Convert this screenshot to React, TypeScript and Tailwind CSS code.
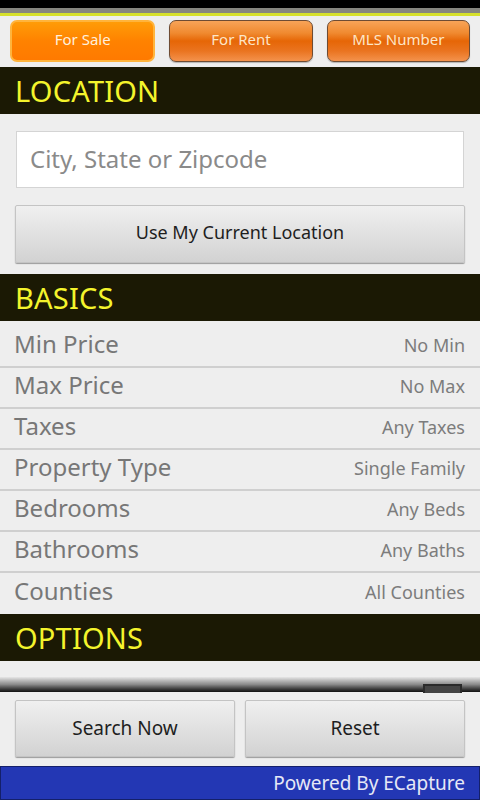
import { useState } from "react"

const rows = [
  { label: "Min Price", value: "No Min" },
  { label: "Max Price", value: "No Max" },
  { label: "Taxes", value: "Any Taxes" },
  { label: "Property Type", value: "Single Family" },
  { label: "Bedrooms", value: "Any Beds" },
  { label: "Bathrooms", value: "Any Baths" },
  { label: "Counties", value: "All Counties" },
]

const tabs = ["For Sale", "For Rent", "MLS Number"]

function SectionHeader({ title }: { title: string }) {
  return (
    <div className="h-[47px] bg-[#1b1904] flex items-center px-[15px]">
      <span className="text-[29px] leading-none text-[#f4f42c] tracking-[0.2px]">{title}</span>
    </div>
  )
}

export default function App() {
  const [active, setActive] = useState("For Sale")

  return (
    <div className="w-[480px] h-[800px] flex flex-col bg-[#eeeeee] overflow-hidden relative" style={{ fontFamily: '"Noto Sans", "Open Sans", sans-serif' }}>
      <div className="h-[8px] bg-black" />
      <div className="h-[5px] bg-[#868680]" />
      <div className="h-[3px] bg-[#d6e02c]" />

      <div className="h-[51px] flex items-center gap-[14px] px-[10px] pb-[2px]">
        {tabs.map(tab => (
          <button
            key={tab}
            onClick={() => setActive(tab)}
            className={
              tab === active
                ? "flex-1 h-[42px] pb-[2px] rounded-[7px] border-2 border-[#ffb43c] bg-gradient-to-b from-[#ff9c08] via-[#ff8200] to-[#ff7a00] text-[15px] text-[#fff0dc]"
                : "flex-1 h-[42px] pb-[2px] rounded-[7px] border border-[#6e4c34] bg-[linear-gradient(to_bottom,#f8a458_0%,#f08a30_30%,#e66606_50%,#ea7420_75%,#f4924c_100%)] text-[15px] text-[#fde6c8] shadow-[0_1px_1px_rgba(0,0,0,0.25)]"
            }
          >
            {tab}
          </button>
        ))}
      </div>

      <SectionHeader title="LOCATION" />

      <div className="px-[16px] pt-[17px] pb-[11px] flex flex-col gap-[17px]">
        <input
          placeholder="City, State or Zipcode"
          className="h-[57px] w-full bg-white border border-[#d4d4d4] px-[13px] pb-[2px] text-[24px] text-[#333] placeholder:text-[#8a8a8a] outline-none"
        />
        <button className="-mx-px h-[58px] pb-[4px] rounded-[2px] border border-[#c4c4c4] bg-gradient-to-b from-[#f0f0f0] to-[#d2d2d2] text-[18px] text-[#1e1e1e] shadow-[0_1px_1px_rgba(0,0,0,0.35)]">
          Use My Current Location
        </button>
      </div>

      <SectionHeader title="BASICS" />

      <div className="pt-[6px]">
        {rows.map((row, i) => (
          <div
            key={row.label}
            className={`h-[41px] flex items-center justify-between pl-[14px] pr-[15px] ${i < rows.length - 1 ? "border-b-2 border-[#cfcfcf]" : ""}`}
          >
            <span className="text-[24px] text-[#777777] mb-[6px]">{row.label}</span>
            <span className="text-[18px] text-[#7c7c7c] mb-[2px]">{row.value}</span>
          </div>
        ))}
      </div>

      <SectionHeader title="OPTIONS" />

      <div className="h-[16px]" />
      <div className="h-[15px] bg-gradient-to-b from-[#e6e6e6] via-[#8a8a8a] to-[#111111]" />

      <div className="flex-1 flex gap-[10px] px-[15px] pt-[8px]">
        <button className="flex-1 h-[57px] rounded-[2px] border border-[#c4c4c4] bg-gradient-to-b from-[#f0f0f0] to-[#d2d2d2] text-[19px] text-[#1e1e1e] shadow-[0_1px_1px_rgba(0,0,0,0.35)]">
          Search Now
        </button>
        <button className="flex-1 h-[57px] rounded-[2px] border border-[#c4c4c4] bg-gradient-to-b from-[#f0f0f0] to-[#d2d2d2] text-[19px] text-[#1e1e1e] shadow-[0_1px_1px_rgba(0,0,0,0.35)]">
          Reset
        </button>
      </div>

      <div className="h-[34px] bg-[#2337b4] border border-[#14206a] flex items-center justify-end pr-[14px]">
        <span className="text-[19px] text-[#e6e8f6]">Powered By ECapture</span>
      </div>

      <div className="absolute left-[423px] top-[684px] w-[39px] h-[9px] border-2 border-b-0 border-[#2a2a2a] bg-[#444444]" />
    </div>
  )
}
